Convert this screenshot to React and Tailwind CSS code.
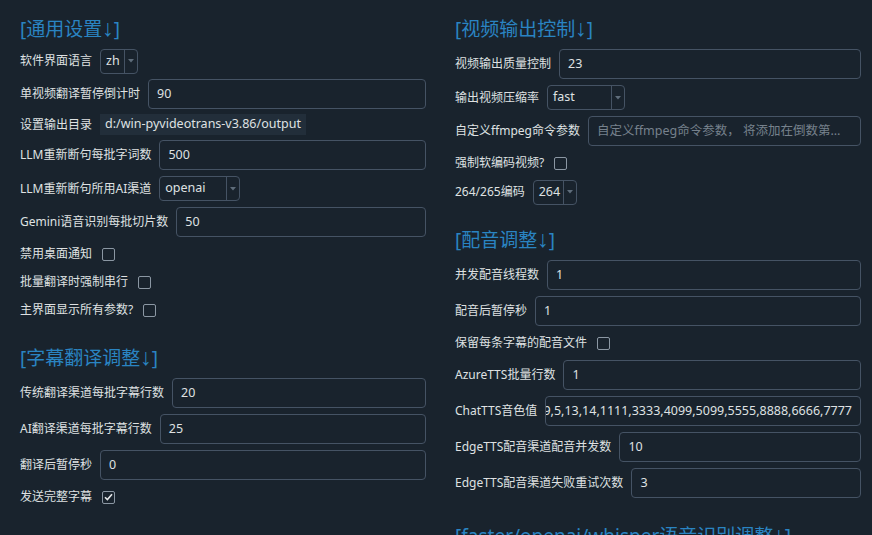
import React from 'react';

const font = { fontFamily: '"Noto Sans", "Noto Sans CJK SC", sans-serif' };

function Title({ text, className = '' }) {
  return (
    <div className={`h-[28px] flex items-center text-[19px] leading-none text-[#2a84c2] whitespace-nowrap ${className}`}>
      <span>[{text}</span>
      <span className="text-[23px] -mt-[2px]" style={{ fontFamily: '"Liberation Sans", sans-serif' }}>↓</span>
      <span>]</span>
    </div>
  );
}

function Row({ label, h = 'h-[30px]', className = '', children }) {
  return (
    <div className={`flex items-center gap-[8px] ${h} ${className}`}>
      <span className="whitespace-nowrap shrink-0">{label}</span>
      {children}
    </div>
  );
}

function Input({ value, placeholder }) {
  return (
    <div className="flex-1 h-full min-w-0 flex items-center border border-[#455364] rounded-[4px] bg-[#19232d] px-[8px] text-[12.5px] overflow-hidden whitespace-nowrap">
      {value ? value : <span className="text-[#76818c] truncate">{placeholder}</span>}
    </div>
  );
}

function Combo({ value, w }) {
  return (
    <div className={`${w} h-[25px] flex border border-[#455364] rounded-[4px] text-[12.5px] shrink-0`}>
      <div className="flex-1 flex items-center pl-[5px]">{value}</div>
      <div className="w-[13px] border-l border-[#455364] flex items-center justify-center">
        <svg width="6" height="4" viewBox="0 0 6 4">
          <path d="M0 0 L6 0 L3 3.5 Z" fill="#5f6d7b" />
        </svg>
      </div>
    </div>
  );
}

function Check({ label, checked, className = '' }) {
  return (
    <div className={`flex items-center gap-[10px] h-[22px] ${className}`}>
      <span className="whitespace-nowrap">{label}</span>
      <span className="w-[13px] h-[13px] border border-[#8b97a3] rounded-[2px] flex items-center justify-center">
        {checked && (
          <svg width="9" height="8" viewBox="0 0 9 8">
            <path d="M1 4.2 L3.4 6.6 L8 1.2" stroke="#e6e8ea" strokeWidth="1.6" fill="none" />
          </svg>
        )}
      </span>
    </div>
  );
}

export default function App() {
  return (
    <div
      className="w-[872px] h-[535px] overflow-hidden bg-[#19232d] text-[#dfe1e2] text-[12px] pt-[15px] pl-[20px] pr-[11px] grid grid-cols-2 gap-x-[29px] items-start"
      style={font}
    >
      {/* left column */}
      <div className="flex flex-col gap-[6px]">
        <Title text="通用设置" />
        <Row label="软件界面语言" h="h-[24px]">
          <Combo value="zh" w="w-[38px]" />
        </Row>
        <Row label="单视频翻译暂停倒计时">
          <Input value="90" />
        </Row>
        <Row label="设置输出目录" h="h-[21px]" className="-my-[1px]">
          <div className="h-[21px] flex items-center px-[5px] bg-[#222e3a] text-[12.5px] whitespace-nowrap">
            d:/win-pyvideotrans-v3.86/output
          </div>
        </Row>
        <Row label="LLM重新断句每批字词数">
          <Input value="500" />
        </Row>
        <Row label="LLM重新断句所用AI渠道" h="h-[25px]">
          <Combo value="openai" w="w-[81px]" />
        </Row>
        <Row label="Gemini语音识别每批切片数">
          <Input value="50" />
        </Row>
        <Check label="禁用桌面通知" />
        <Check label="批量翻译时强制串行" />
        <Check label="主界面显示所有参数?" />

        <Title text="字幕翻译调整" className="mt-[17px]" />
        <Row label="传统翻译渠道每批字幕行数">
          <Input value="20" />
        </Row>
        <Row label="AI翻译渠道每批字幕行数">
          <Input value="25" />
        </Row>
        <Row label="翻译后暂停秒">
          <Input value="0" />
        </Row>
        <Check label="发送完整字幕" checked />
      </div>

      {/* right column */}
      <div className="flex flex-col gap-[6px]">
        <Title text="视频输出控制" />
        <Row label="视频输出质量控制">
          <Input value="23" />
        </Row>
        <Row label="输出视频压缩率" h="h-[25px]">
          <Combo value="fast" w="w-[78px]" />
        </Row>
        <Row label="自定义ffmpeg命令参数">
          <Input placeholder="自定义ffmpeg命令参数， 将添加在倒数第二..." />
        </Row>
        <Check label="强制软编码视频?" />
        <Row label="264/265编码" h="h-[24px]">
          <Combo value="264" w="w-[44px]" />
        </Row>

        <Title text="配音调整" className="mt-[16px]" />
        <Row label="并发配音线程数">
          <Input value="1" />
        </Row>
        <Row label="配音后暂停秒">
          <Input value="1" />
        </Row>
        <Check label="保留每条字幕的配音文件" />
        <Row label="AzureTTS批量行数">
          <Input value="1" />
        </Row>
        <Row label="ChatTTS音色值">
          <div className="flex-1 h-full min-w-0 flex items-center justify-end border border-[#455364] rounded-[4px] bg-[#19232d] px-[8px] text-[12.5px] overflow-hidden whitespace-nowrap">
            <span className="shrink-0">99,5,13,14,1111,3333,4099,5099,5555,8888,6666,7777</span>
          </div>
        </Row>
        <Row label="EdgeTTS配音渠道配音并发数">
          <Input value="10" />
        </Row>
        <Row label="EdgeTTS配音渠道失败重试次数">
          <Input value="3" />
        </Row>

        <Title text="faster/openai/whisper语音识别调整" className="mt-[18px]" />
      </div>
    </div>
  );
}
